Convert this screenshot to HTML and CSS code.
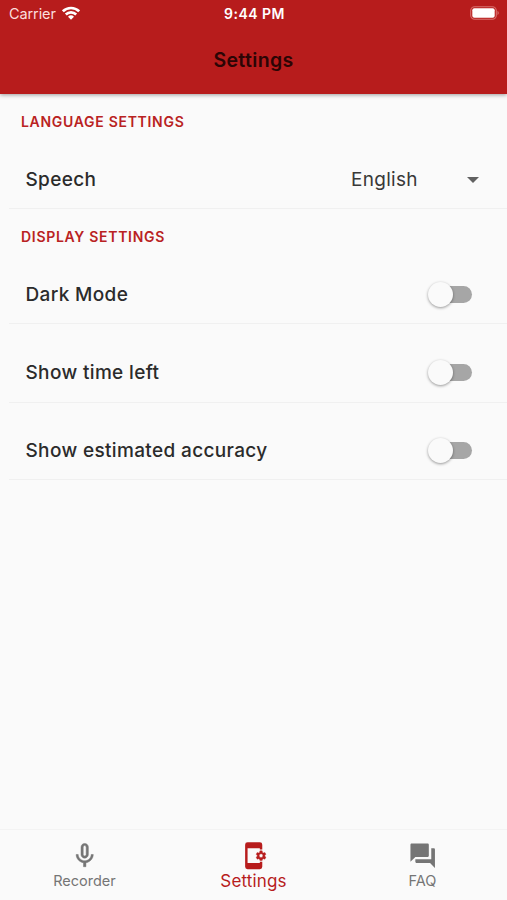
FILE: index.html
```html
<!DOCTYPE html>
<html lang="en">
<head>
<meta charset="utf-8">
<title>Settings</title>
<link rel="stylesheet" href="styles.css">
</head>
<body>
<div class="app">
  <header class="top">
    <div class="status">
      <div class="carrier"><span>Carrier</span>
        <svg class="wifi" viewBox="0 0 18 14"><g fill="none" stroke="#fff" stroke-width="2.6"><path d="M.9 5.3a11.6 11.6 0 0 1 16.2 0"/><path d="M3.8 8.5a7.4 7.4 0 0 1 10.4 0"/></g><path fill="#fff" d="M9 13.7 6 10.7a4.3 4.3 0 0 1 6 0z"/></svg>
      </div>
      <time class="clock">9:44 PM</time>
      <svg class="battery" viewBox="0 0 30 14"><rect x=".7" y=".7" width="25.6" height="12.6" rx="4" fill="none" stroke="#d9706e" stroke-width="1.1"/><rect x="2.3" y="2.3" width="22.4" height="9.4" rx="2" fill="#fff"/><path d="M27.6 4.8q2 2.2 0 4.4z" fill="#e08a88"/></svg>
    </div>
    <h1 class="title">Settings</h1>
  </header>
  <main class="content">
    <h2 class="section">LANGUAGE SETTINGS</h2>
    <div class="row row-first">
      <span class="label">Speech</span>
      <div class="select"><span>English</span><svg class="arrow" viewBox="0 0 12 6"><path d="M0 0h12L6 6z" fill="#616161"/></svg></div>
    </div>
    <h2 class="section">DISPLAY SETTINGS</h2>
    <div class="row row-first"><span class="label">Dark Mode</span><span class="switch"></span></div>
    <div class="row row-middle"><span class="label">Show time left</span><span class="switch"></span></div>
    <div class="row row-last"><span class="label">Show estimated accuracy</span><span class="switch"></span></div>
  </main>
  <nav class="tabs">
    <div class="tab">
      <svg class="icon" viewBox="0 0 24 24"><path stroke="currentColor" stroke-width=".4" d="M12 14c1.66 0 2.99-1.34 2.99-3L15 5c0-1.66-1.34-3-3-3S9 3.34 9 5v6c0 1.66 1.34 3 3 3zm-1.2-9.1c0-.66.54-1.2 1.2-1.2s1.2.54 1.2 1.2l-.01 6.2c0 .66-.53 1.2-1.19 1.2s-1.2-.54-1.2-1.2V4.9zm6.5 6.1c0 3-2.54 5.1-5.3 5.1S6.7 14 6.7 11H5c0 3.41 2.72 6.23 6 6.72V21h2v-3.28c3.28-.48 6-3.3 6-6.72h-1.7z"/></svg>
      <span>Recorder</span>
    </div>
    <div class="tab active">
      <svg class="icon" viewBox="0 0 24 24"><path d="M7 1h10a2 2 0 0 1 2 2v4h-2V6H7v12h10v-1h2v4a2 2 0 0 1-2 2H7a2 2 0 0 1-2-2V3a2 2 0 0 1 2-2z"/><path fill-rule="evenodd" stroke="currentColor" stroke-width=".3" d="M17.1 8h1.8l.3 1.3.7.4 1.2-.4.9 1.6-.9.8v.8l.9.8-.9 1.6-1.2-.4-.7.4-.3 1.1h-1.8l-.3-1.1-.7-.4-1.2.4-.9-1.6.9-.8v-.8l-.9-.8.9-1.6 1.2.4.7-.4zM18 10.5a1.5 1.5 0 1 0 0 3 1.5 1.5 0 0 0 0-3z"/></svg>
      <span>Settings</span>
    </div>
    <div class="tab">
      <svg class="icon" viewBox="0 0 24 24"><path d="M21 6h-2v9H6v2c0 .55.45 1 1 1h11l4 4V7c0-.55-.45-1-1-1zm-4 6V3c0-.55-.45-1-1-1H3c-.55 0-1 .45-1 1v14l4-4h10c.55 0 1-.45 1-1z"/></svg>
      <span>FAQ</span>
    </div>
  </nav>
</div>
</body>
</html>
```
FILE: styles.css
```css
* { box-sizing: border-box; }
body { margin: 0; font-family: Inter, "Liberation Sans", sans-serif; background: #fafafa; color: #2b2b2b; }
.app { height: 900px; display: flex; flex-direction: column; overflow: hidden; }
.top { height: 94px; background: #b71c1c; box-shadow: 0 1px 4px rgba(0, 0, 0, .38); }
.status { height: 27px; padding: 0 7px 0 9px; display: grid; grid-template-columns: 1fr auto 1fr; align-items: center; color: #fff; font-size: 14.5px; }
.carrier { display: flex; align-items: center; gap: 6px; color: #fbdedd; letter-spacing: -.1px; }
.wifi { width: 18px; height: 14px; margin-top: -1px; }
.clock { font-weight: 600; font-size: 14px; letter-spacing: .5px; }
.battery { width: 30px; height: 14px; justify-self: end; margin-top: -1px; }
.title { margin: 19px 0 0; text-align: center; font-size: 19.5px; line-height: 28px; font-weight: 600; color: #2b0505; letter-spacing: .35px; }
.content { flex: 1; }
.section { margin: 0; padding: 18px 0 0 21px; height: 56px; font-size: 14px; line-height: 20px; font-weight: 600; color: #b92222; letter-spacing: .7px; }
.row { height: 79px; margin-left: 9px; padding: 17px 34px 0 17px; border-bottom: 1px solid #f0f0f0; display: flex; align-items: center; justify-content: space-between; }
.row-first { height: 59px; padding-top: 0; }
.row-middle { padding-top: 19px; }
.row-last { height: 77px; padding-top: 18px; }
.label { font-size: 19px; font-weight: 500; letter-spacing: .35px; margin-left: -.5px; }
.select { display: flex; align-items: center; justify-content: space-between; width: 127px; margin-right: -6px; font-size: 19px; color: #383838; letter-spacing: .3px; }
.select span { margin-left: -1px; }
.arrow { width: 12px; height: 6px; margin-top: 1px; }
.switch { width: 41px; height: 17px; border-radius: 9px; background: #a6a6a6; display: flex; align-items: center; margin-right: 1.5px; }
.switch::before { content: ""; width: 25px; height: 25px; border-radius: 50%; background: #fafafa; box-shadow: 0 1px 3px rgba(0, 0, 0, .4); margin-left: -3px; flex: none; }
.tabs { height: 71px; display: flex; border-top: 1px solid #f3f3f3; padding-top: 11px; }
.tab { flex: 1; display: flex; flex-direction: column; align-items: center; color: #757575; font-size: 14.5px; line-height: 22px; }
.icon { width: 29.4px; height: 29.4px; fill: currentColor; }
.active { color: #b71c1c; font-size: 17px; letter-spacing: .15px; }
```
